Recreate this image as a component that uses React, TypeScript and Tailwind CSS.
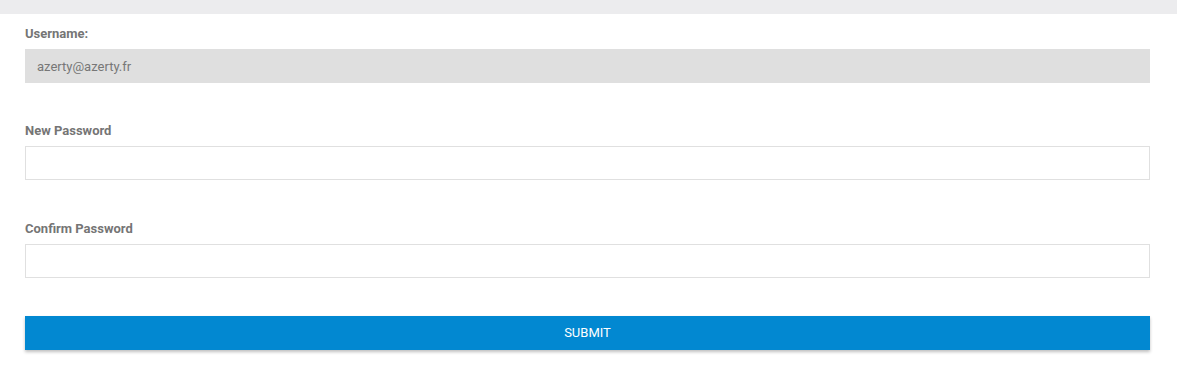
import React from "react";

const Field: React.FC<{
  label: string;
  value?: string;
  disabled?: boolean;
  className?: string;
}> = ({ label, value, disabled, className }) => (
  <div className={className}>
    <label className="block text-[13px] leading-[18px] font-bold text-[#757575]">
      {label}
    </label>
    {disabled ? (
      <input
        type="text"
        value={value}
        readOnly
        className="mt-[6px] block w-full h-[34px] px-[12px] bg-[#dfdfdf] text-[13px] text-[#777777] outline-none"
      />
    ) : (
      <input
        type="password"
        className="mt-[6px] block w-full h-[34px] px-[12px] bg-white border border-[#e0e0e0] text-[13px] text-[#555555] outline-none"
      />
    )}
  </div>
);

export default function App() {
  return (
    <div className="w-full min-h-[377px] bg-white font-['Roboto','Liberation_Sans',sans-serif]">
      <div className="h-[14px] bg-[#ececee]" />
      <form className="pl-[25px] pr-[27px] pt-[11px]">
        <Field label="Username:" value="azerty@azerty.fr" disabled />
        <Field label="New Password" className="mt-[39px]" />
        <Field label="Confirm Password" className="mt-[40px]" />
        <button
          type="button"
          className="mt-[38px] block w-full h-[34px] bg-[#0288d1] text-white text-[13px] uppercase shadow-[0_2px_3px_rgba(0,0,0,0.25)]"
        >
          Submit
        </button>
      </form>
    </div>
  );
}
